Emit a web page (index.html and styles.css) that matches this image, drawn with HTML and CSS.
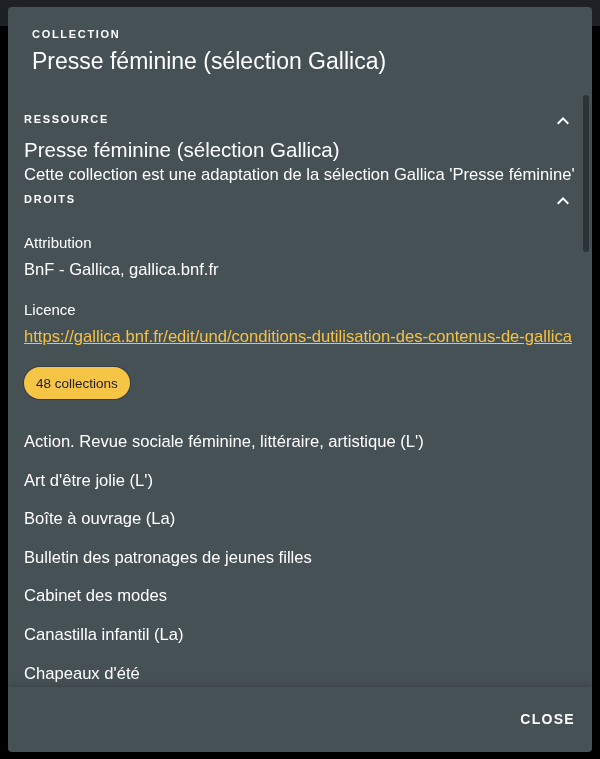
FILE: index.html
```html
<!DOCTYPE html>
<html lang="fr">
<head>
<meta charset="utf-8">
<title>Collection</title>
<link rel="stylesheet" href="styles.css">
</head>
<body>
<div class="appbar"></div>
<div class="dialog">
  <header class="dlg-head">
    <div class="overline">Collection</div>
    <h1 class="dlg-title">Presse féminine (sélection Gallica)</h1>
  </header>
  <div class="dlg-body">
    <section class="sec">
      <div class="sec-head"><span class="overline">Ressource</span>
        <svg class="chev" viewBox="0 0 24 24" width="24" height="24"><path d="M12 8l-6 6 1.41 1.41L12 10.83l4.59 4.58L18 14z" fill="#fff"/></svg></div>
      <div class="res-title">Presse féminine (sélection Gallica)</div>
      <div class="res-desc">Cette collection est une adaptation de la sélection Gallica 'Presse féminine'</div>
    </section>
    <section class="sec">
      <div class="sec-head"><span class="overline">Droits</span>
        <svg class="chev" viewBox="0 0 24 24" width="24" height="24"><path d="M12 8l-6 6 1.41 1.41L12 10.83l4.59 4.58L18 14z" fill="#fff"/></svg></div>
      <div class="field first">
        <div class="label">Attribution</div>
        <div class="value">BnF - Gallica, gallica.bnf.fr</div>
      </div>
      <div class="field">
        <div class="label">Licence</div>
        <a class="value link" href="#">https://gallica.bnf.fr/edit/und/conditions-dutilisation-des-contenus-de-gallica</a>
      </div>
    </section>
    <div class="chip-row"><span class="chip">48 collections</span></div>
    <ul class="list">
      <li>Action. Revue sociale féminine, littéraire, artistique (L')</li>
      <li>Art d'être jolie (L')</li>
      <li>Boîte à ouvrage (La)</li>
      <li>Bulletin des patronages de jeunes filles</li>
      <li>Cabinet des modes</li>
      <li>Canastilla infantil (La)</li>
      <li>Chapeaux d'été</li>
    </ul>
  </div>
  <div class="scroll-thumb"></div>
  <footer class="dlg-foot">
    <button class="btn" type="button">Close</button>
  </footer>
</div>
</body>
</html>
```

FILE: styles.css
```css
* { box-sizing: border-box; }
html, body { margin: 0; height: 100%; }
body {
  background: #000;
  font-family: "Liberation Sans", Arial, sans-serif;
  color: #fff;
  overflow: hidden;
}
.appbar { height: 26px; background: #1e2226; }
.dialog {
  position: fixed;
  top: 7px;
  left: 8px;
  width: 584px;
  height: 745px;
  background: #465156;
  border-radius: 4px;
  display: flex;
  flex-direction: column;
  overflow: hidden;
  box-shadow: 0 11px 15px rgba(0,0,0,.2);
}
.overline {
  font-size: 11px;
  line-height: 16px;
  font-weight: 700;
  letter-spacing: 1.7px;
  text-transform: uppercase;
}
.dlg-head { padding: 19px 24px 20px; flex: none; }
.dlg-title { margin: 5px 0 0; font-size: 23px; line-height: 28px; font-weight: 400; }
.dlg-body {
  flex: 1;
  overflow-y: auto;
  scrollbar-width: none;
  padding: 16px 16px 0;
}
.dlg-body::-webkit-scrollbar { display: none; }
.scroll-thumb {
  position: absolute;
  left: 575px;
  top: 88px;
  width: 6px;
  height: 157px;
  border-radius: 3px;
  background: #2b3337;
}
.sec-head {
  display: flex;
  justify-content: space-between;
  align-items: center;
  height: 16px;
}
.chev { flex: none; margin-top: 3px; margin-right: 1px; }
.res-title { margin-top: 11px; font-size: 20.5px; line-height: 24px; }
.res-desc { margin-top: 1px; font-size: 16.6px; line-height: 24px; margin-bottom: 4px; }
.field { margin-top: 18px; }
.field.first { margin-top: 26px; }
.label { font-size: 15px; line-height: 20px; }
.value { display: block; margin-top: 5px; font-size: 16.6px; line-height: 24px; color: #fff; }
.link { color: #f5c242; text-decoration: underline; }
.chip-row { margin-top: 18px; }
.chip {
  display: inline-flex;
  align-items: center;
  height: 32px;
  padding: 0 12px;
  border-radius: 16px;
  background: #f6c545;
  color: #1d1d1d;
  font-size: 13.5px;
  box-shadow: 0 0 0 1px rgba(20,30,40,.35);
}
.list { list-style: none; margin: 23.7px 0 0; padding: 0; }
.list li { font-size: 16.6px; line-height: 24px; padding: 7.3px 0; }
.dlg-foot {
  flex: none;
  height: 65px;
  display: flex;
  justify-content: flex-end;
  align-items: center;
  padding: 0 9px;
  position: relative;
  box-shadow: 0 -3px 6px rgba(0,0,0,.12);
}
.btn {
  background: none;
  border: 0;
  color: #fff;
  font-family: inherit;
  font-size: 14px;
  font-weight: 700;
  letter-spacing: 1.3px;
  text-transform: uppercase;
  padding: 6px 8px;
  margin-top: -2px;
}
```
